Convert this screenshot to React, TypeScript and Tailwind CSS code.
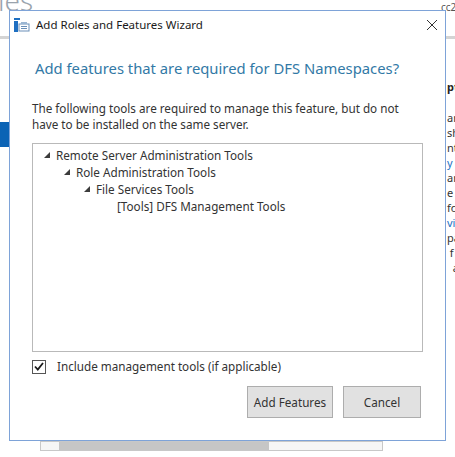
import React from 'react';

// Windows Server "Add Roles and Features Wizard" confirmation dialog, shown over
// the partially visible Server Manager page behind it.

const FONT = { fontFamily: '"Segoe UI", "Noto Sans", "Open Sans", sans-serif' };

function WizardIcon() {
  return (
    <svg width="16" height="14" viewBox="0 0 16 14">
      <rect x="0" y="0" width="6" height="2" fill="#1e6fc1" />
      <rect x="0" y="3" width="4" height="11" fill="#1e6fc1" />
      <rect x="5" y="6" width="10" height="7" fill="#ffffff" stroke="#6a8fb8" />
      <rect x="7" y="8" width="6" height="1" fill="#6a8fb8" />
      <rect x="7" y="10" width="6" height="1" fill="#6a8fb8" />
      <rect x="7" y="4" width="6" height="2" fill="#9bb6d3" />
    </svg>
  );
}

function Expander() {
  return (
    <svg width="7" height="7" viewBox="0 0 7 7" className="shrink-0">
      <polygon points="6,0 6,6 0,6" fill="#3c3c3c" />
    </svg>
  );
}

const tree = [
  { depth: 0, label: 'Remote Server Administration Tools', expandable: true },
  { depth: 1, label: 'Role Administration Tools', expandable: true },
  { depth: 2, label: 'File Services Tools', expandable: true },
  { depth: 3, label: '[Tools] DFS Management Tools', expandable: false },
];

const behind = [
  { t: 'pt', y: 80, c: 'text-[#222] font-bold' },
  { t: 'an', y: 111, c: 'text-[#333]' },
  { t: 'sh', y: 126, c: 'text-[#333]' },
  { t: 'nt', y: 141, c: 'text-[#333]' },
  { t: 'y', y: 156, c: 'text-[#1a6fc4]' },
  { t: 'ar', y: 171, c: 'text-[#333]' },
  { t: 'e', y: 186, c: 'text-[#333]' },
  { t: 'fo', y: 201, c: 'text-[#333]' },
  { t: 'vi', y: 216, c: 'text-[#1a6fc4]' },
  { t: 'pa', y: 231, c: 'text-[#333]' },
  { t: ' f', y: 246, c: 'text-[#333]' },
  { t: '  a', y: 261, c: 'text-[#333]' },
];

export default function App() {
  return (
    <div className="relative w-[455px] h-[457px] overflow-hidden bg-white" style={FONT}>
      {/* page behind the dialog */}
      <div className="absolute left-[-2px] top-[-14px] text-[28px] font-light text-[#9aa3ad] leading-none">les</div>
      <div className="absolute left-[441px] top-[2px] text-[10px] text-[#555] leading-none">cc2</div>
      <div className="absolute left-0 top-[36px] w-full h-[3px] bg-[#d4d4d4]" />
      <div className="absolute left-0 top-[122px] w-[9px] h-[25px] bg-[#0b63b5]" />
      {behind.map((b) => (
        <div key={b.y} className={`absolute left-[447px] h-[13px] text-[11px] leading-[13px] whitespace-pre ${b.c}`} style={{ top: b.y }}>
          {b.t}
        </div>
      ))}
      <div className="absolute left-[40px] top-[441px] w-[343px] h-[10px] border border-[#c8c8c8] bg-[#f6f6f6]">
        <div className="ml-[18px] w-[210px] h-full bg-[#c6c6c6]" />
      </div>

      {/* dialog window */}
      <div className="absolute left-[9px] top-[10px] w-[437px] h-[431px] border border-[#7ea3d8] bg-white flex flex-col">
        <div className="h-[25px] flex items-center pl-[4px] pr-[7px] mt-[1px]">
          <WizardIcon />
          <span className="ml-[6px] text-[11.5px] text-[#1a1a1a]">Add Roles and Features Wizard</span>
          <svg width="12" height="12" viewBox="0 0 12 12" className="ml-auto">
            <path d="M1 1 L11 11 M11 1 L1 11" stroke="#333" strokeWidth="1" />
          </svg>
        </div>

        <div className="flex flex-col px-[22px]">
          <h1 className="mt-[24px] ml-[3px] text-[14.8px] text-[#3279a6] leading-none whitespace-nowrap">
            Add features that are required for DFS Namespaces?
          </h1>
          <p className="mt-[24px] text-[11.7px] text-[#333] leading-[16px]">
            The following tools are required to manage this feature, but do not have to be installed on the same server.
          </p>

          <div className="mt-[11px] h-[209px] border border-[#b9b9b9] pt-[3px] pl-[11px]">
            {tree.map((n) => (
              <div key={n.label} className="h-[17px] flex items-center text-[11.7px] text-[#333]" style={{ paddingLeft: n.depth * 20 }}>
                <span className="w-[12px] flex items-center">{n.expandable && <Expander />}</span>
                <span className={n.expandable ? '' : 'pl-[1px]'}>{n.label}</span>
              </div>
            ))}
          </div>

          <label className="mt-[6px] flex items-center text-[11.7px] text-[#333]">
            <span className="w-[14px] h-[14px] border border-[#555] bg-white flex items-center justify-center">
              <svg width="10" height="9" viewBox="0 0 10 9">
                <path d="M1 4.5 L3.8 7.5 L9 1" stroke="#1a1a1a" strokeWidth="1.8" fill="none" />
              </svg>
            </span>
            <span className="ml-[11px]">Include management tools (if applicable)</span>
          </label>

          <div className="mt-[11px] flex justify-end gap-[10px] pr-[2px]">
            <button className="w-[86px] h-[32px] border border-[#adadad] bg-[#e1e1e1] text-[11.7px] text-[#333]">
              Add Features
            </button>
            <button className="w-[78px] h-[32px] border border-[#adadad] bg-[#e1e1e1] text-[11.7px] text-[#333]">
              Cancel
            </button>
          </div>
        </div>
      </div>
    </div>
  );
}
